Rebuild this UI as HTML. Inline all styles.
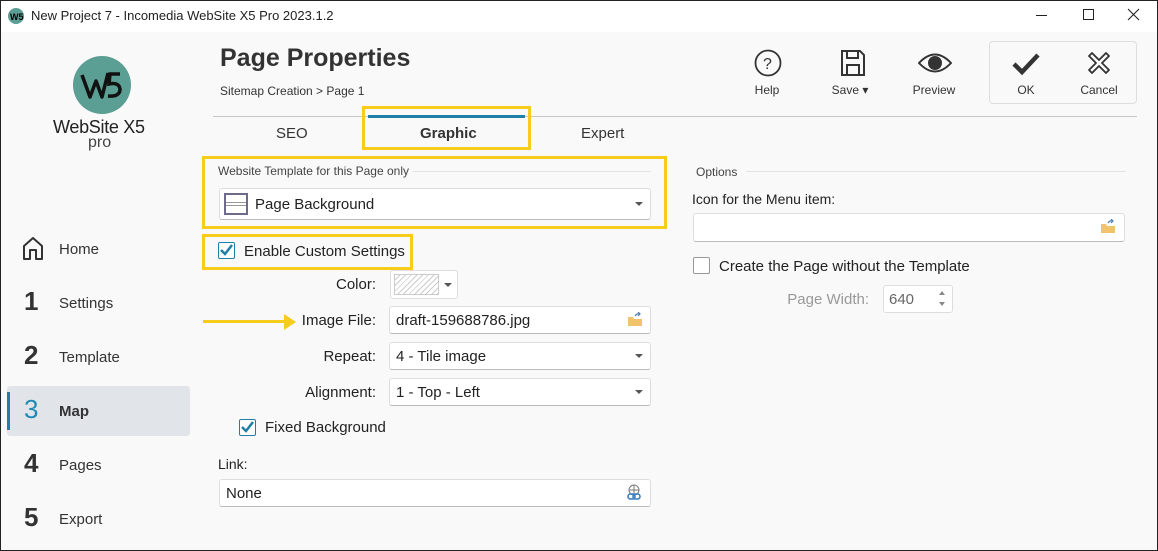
<!DOCTYPE html>
<html><head><meta charset="utf-8"><style>
*{box-sizing:border-box;margin:0;padding:0}
body{width:1158px;height:551px;overflow:hidden;font-family:"Liberation Sans",sans-serif;color:#222;background:#f9f9f9;position:relative}
.a{position:absolute;white-space:nowrap}
.win{position:absolute;left:0;top:0;width:1158px;height:551px;border:1px solid #222}
.title{position:absolute;left:0;top:0;width:1158px;height:32px;background:#fff}
.field{position:absolute;background:#fff;border:1px solid #ddd;border-bottom-color:#bbb;border-radius:3px;font-size:15px;padding-left:6px;line-height:27px}
.dd::after{content:"";position:absolute;right:7px;top:50%;margin-top:-2px;border-left:4px solid transparent;border-right:4px solid transparent;border-top:4px solid #555}
.yb{position:absolute;border:3px solid #f6cd1c}
.lbl{font-size:15px;text-align:right}
.nav{position:absolute;left:24px;font-size:15px;color:#333}
.nav b{position:absolute;left:0;font-size:26px;font-weight:bold;color:#333;top:-9px}
.nav span{position:absolute;left:35px}
.cb{position:absolute;width:17px;height:17px;border:1.5px solid #1f7fa6;border-radius:2px;background:#fff}
.tb{position:absolute;font-size:12px;color:#333;text-align:center;width:70px}
</style></head><body>
<div class="title"></div>
<svg class="a" style="left:8px;top:8px" width="16" height="16"><circle cx="8" cy="8" r="8" fill="#5a9e94"/><text x="2" y="12" font-size="9" font-weight="bold" font-family="Liberation Sans">W5</text></svg>
<div class="a" style="left:31px;top:8px;font-size:13px">New Project 7 - Incomedia WebSite X5 Pro 2023.1.2</div>
<div class="a" style="left:1036px;top:15px;width:11px;height:1px;background:#222"></div>
<div class="a" style="left:1083px;top:9px;width:11px;height:11px;border:1px solid #222"></div>
<svg class="a" style="left:1127px;top:8px" width="13" height="13"><path d="M1 1L12 12M12 1L1 12" stroke="#222" stroke-width="1.1"/></svg>

<svg class="a" style="left:72px;top:55px" width="60" height="60"><circle cx="30" cy="30" r="29" fill="#5a9e94"/><path d="M10 20L18 42L24 26L30 42L36 18" stroke="#111" stroke-width="3.5" fill="none" stroke-linejoin="round"/><path d="M48 19H38L37 29Q47 27 48 34Q48 42 36 41" stroke="#111" stroke-width="3.5" fill="none"/></svg>
<div class="a" style="left:53px;top:117px;font-size:18px;color:#222;letter-spacing:-0.3px">WebSite X5</div>
<div class="a" style="left:88px;top:134px;font-size:16px;color:#444">pro</div>

<div class="nav" style="top:241px"><svg class="a" style="left:-2px;top:-6px" width="22" height="26"><path d="M2 24V11L11 3L20 11V24H14V15H8V24Z" stroke="#333" stroke-width="2" fill="none" stroke-linejoin="round"/></svg><span>Home</span></div>
<div class="nav" style="top:295px"><b>1</b><span>Settings</span></div>
<div class="nav" style="top:349px"><b>2</b><span>Template</span></div>
<div class="a" style="left:7px;top:386px;width:183px;height:50px;background:#e1e5ea;border-radius:3px"></div>
<div class="a" style="left:7px;top:392px;width:3px;height:38px;background:#1f7fa6"></div>
<div class="nav" style="top:403px"><b style="color:#1f8ab3;font-weight:normal">3</b><span style="font-weight:bold">Map</span></div>
<div class="nav" style="top:457px"><b>4</b><span>Pages</span></div>
<div class="nav" style="top:511px"><b>5</b><span>Export</span></div>

<div class="a" style="left:220px;top:44px;font-size:25px;font-weight:bold;color:#333">Page Properties</div>
<div class="a" style="left:220px;top:84px;font-size:12px;color:#333">Sitemap Creation &gt; Page 1</div>

<svg class="a" style="left:754px;top:49px" width="28" height="28"><circle cx="14" cy="14" r="12.5" stroke="#333" stroke-width="1.8" fill="none"/><text x="9" y="20" font-size="16" font-family="Liberation Sans" fill="#333">?</text></svg>
<div class="tb" style="left:732px;top:83px">Help</div>
<svg class="a" style="left:840px;top:49px" width="26" height="28"><path d="M2 2H20L24 6V26H2Z" stroke="#333" stroke-width="2" fill="none"/><path d="M7 2V9H18V2M7 26V16H19V26" stroke="#333" stroke-width="2" fill="none"/></svg>
<div class="tb" style="left:815px;top:83px">Save ▾</div>
<svg class="a" style="left:918px;top:52px" width="34" height="22"><path d="M1 11Q17 -6 33 11Q17 28 1 11Z" stroke="#333" stroke-width="2" fill="none"/><circle cx="17" cy="11" r="7" fill="#333"/></svg>
<div class="tb" style="left:899px;top:83px">Preview</div>
<div class="a" style="left:989px;top:41px;width:148px;height:63px;border:1px solid #ddd;border-radius:4px;background:#f9f9f9"></div>
<svg class="a" style="left:1012px;top:52px" width="28" height="24"><path d="M2 12L10 20L26 3" stroke="#333" stroke-width="4.5" fill="none"/></svg>
<div class="tb" style="left:991px;top:83px">OK</div>
<svg class="a" style="left:1087px;top:51px" width="24" height="24"><path d="M2 5L5 2L12 9L19 2L22 5L15 12L22 19L19 22L12 15L5 22L2 19L9 12Z" stroke="#333" stroke-width="1.8" fill="none" stroke-linejoin="round"/></svg>
<div class="tb" style="left:1064px;top:83px">Cancel</div>

<div class="a" style="left:213px;top:116px;width:924px;height:1px;background:#c8c8c8"></div>
<div class="a" style="left:368px;top:115px;width:157px;height:3px;background:#1f7fa6"></div>
<div class="a" style="left:276px;top:125px;font-size:15px;color:#333">SEO</div>
<div class="a" style="left:420px;top:125px;font-size:15px;font-weight:bold;color:#333">Graphic</div>
<div class="a" style="left:581px;top:125px;font-size:15px;color:#333">Expert</div>
<div class="yb" style="left:362px;top:106px;width:169px;height:44px"></div>

<div class="a" style="left:218px;top:164px;font-size:12px;color:#444">Website Template for this Page only</div>
<div class="a" style="left:413px;top:171px;width:238px;height:1px;background:#e2e2e2"></div>
<div class="field dd" style="left:219px;top:188px;width:432px;height:32px;line-height:31px;padding-left:35px">Page Background</div>
<div class="a" style="left:224px;top:193px;width:24px;height:22px;border:2.5px solid #6d6a8c;background:#fff"><div style="margin-top:7px;height:1px;background:#999"></div><div style="margin-top:2px;height:1px;background:#999"></div></div>
<div class="yb" style="left:202px;top:156px;width:465px;height:73px"></div>

<div class="cb" style="left:218px;top:242px"><svg width="14" height="14" style="position:absolute;left:0;top:0"><path d="M2 7L6 11L13 2" stroke="#1f7fa6" stroke-width="2.5" fill="none"/></svg></div>
<div class="a" style="left:244px;top:243px;font-size:15px">Enable Custom Settings</div>
<div class="yb" style="left:202px;top:234px;width:211px;height:36px"></div>

<div class="a lbl" style="left:280px;top:276px;width:96px">Color:</div>
<div class="a" style="left:390px;top:270px;width:68px;height:29px;background:#fff;border:1px solid #ddd;border-radius:3px"></div>
<div class="a" style="left:394px;top:274px;width:45px;height:21px;border:1px solid #ccc;background:repeating-linear-gradient(135deg,#fff 0 3px,#ccc 3px 4px)"></div>
<div class="a" style="left:444px;top:283px;border-left:4px solid transparent;border-right:4px solid transparent;border-top:4px solid #555"></div>

<div class="a" style="left:203px;top:320px;width:82px;height:3px;background:#f6cd1c"></div>
<div class="a" style="left:284px;top:314px;border-top:8px solid transparent;border-bottom:8px solid transparent;border-left:12px solid #f6cd1c"></div>
<div class="a lbl" style="left:280px;top:312px;width:96px">Image File:</div>
<div class="field" style="left:389px;top:306px;width:262px;height:28px">draft-159688786.jpg</div>
<svg class="a" style="left:627px;top:312px" width="16" height="15"><path d="M1 5H6L7 7H15V14H1Z" fill="#f1c36d"/><path d="M8 4Q10 1 13 2M11 0L13 2L11 4" stroke="#4a7fb5" stroke-width="1.2" fill="none"/></svg>
<div class="a lbl" style="left:280px;top:348px;width:96px">Repeat:</div>
<div class="field dd" style="left:389px;top:342px;width:262px;height:28px">4 - Tile image</div>
<div class="a lbl" style="left:280px;top:384px;width:96px">Alignment:</div>
<div class="field dd" style="left:389px;top:378px;width:262px;height:28px">1 - Top - Left</div>

<div class="cb" style="left:239px;top:419px"><svg width="14" height="14" style="position:absolute;left:0;top:0"><path d="M2 7L6 11L13 2" stroke="#1f7fa6" stroke-width="2.5" fill="none"/></svg></div>
<div class="a" style="left:265px;top:419px;font-size:15px">Fixed Background</div>
<div class="a" style="left:218px;top:456px;font-size:14px">Link:</div>
<div class="field" style="left:219px;top:479px;width:432px;height:28px">None</div>
<svg class="a" style="left:626px;top:484px" width="16" height="17"><circle cx="8" cy="6" r="5" stroke="#777" fill="none"/><path d="M3 6H13M8 1V11" stroke="#777"/><rect x="2" y="10" width="7" height="5" rx="2.5" stroke="#3a7fc0" stroke-width="1.6" fill="none"/><rect x="7" y="10" width="7" height="5" rx="2.5" stroke="#3a7fc0" stroke-width="1.6" fill="none"/></svg>

<div class="a" style="left:696px;top:165px;font-size:12px;color:#444">Options</div>
<div class="a" style="left:746px;top:171px;width:380px;height:1px;background:#e2e2e2"></div>
<div class="a" style="left:692px;top:191px;font-size:14px">Icon for the Menu item:</div>
<div class="field" style="left:693px;top:213px;width:432px;height:29px"></div>
<svg class="a" style="left:1100px;top:219px" width="16" height="15"><path d="M1 5H6L7 7H15V14H1Z" fill="#f1c36d"/><path d="M8 4Q10 1 13 2M11 0L13 2L11 4" stroke="#4a7fb5" stroke-width="1.2" fill="none"/></svg>
<div class="a" style="left:693px;top:257px;width:17px;height:17px;border:1px solid #999;border-radius:2px;background:#fff"></div>
<div class="a" style="left:719px;top:258px;font-size:15px">Create the Page without the Template</div>
<div class="a lbl" style="left:760px;top:291px;width:109px;color:#999">Page Width:</div>
<div class="a" style="left:883px;top:285px;width:70px;height:28px;background:#fff;border:1px solid #ddd;border-radius:3px;font-size:15px;color:#666;padding-left:5px;line-height:27px">640</div>
<div class="a" style="left:939px;top:291px;border-left:3px solid transparent;border-right:3px solid transparent;border-bottom:4px solid #888"></div>
<div class="a" style="left:939px;top:302px;border-left:3px solid transparent;border-right:3px solid transparent;border-top:4px solid #888"></div>
<div class="win"></div>
</body></html>
